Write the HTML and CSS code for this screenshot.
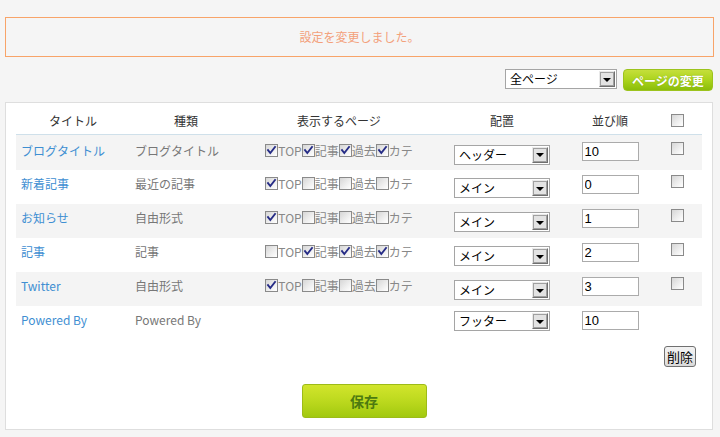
FILE: index.html
```html
<!DOCTYPE html>
<html lang="ja">
<head>
<meta charset="utf-8">
<title>ウィジェット設定</title>
<link rel="stylesheet" href="styles.css">
</head>
<body>
<div class="msg">設定を変更しました。</div>

<div class="toolbar">
  <div class="select select-wide"><span class="select-text">全ページ</span><span class="arrow"><i></i></span></div>
  <button class="btn-green">ページの変更</button>
</div>

<div class="panel">
  <table class="widgets">
    <colgroup>
      <col class="c1"><col class="c2"><col class="c3"><col class="c4"><col class="c5"><col class="c6">
    </colgroup>
    <thead>
      <tr>
        <th>タイトル</th>
        <th>種類</th>
        <th>表示するページ</th>
        <th>配置</th>
        <th>並び順</th>
        <th><span class="cb"></span></th>
      </tr>
    </thead>
    <tbody>
      <tr class="gray first">
        <td class="name"><a>ブログタイトル</a></td>
        <td class="kind">ブログタイトル</td>
        <td class="pages"><span class="cb on"><svg viewBox="0 0 11 11"><path d="M2 5.2 L4.3 8 L9 2"/></svg></span>TOP<span class="cb on"><svg viewBox="0 0 11 11"><path d="M2 5.2 L4.3 8 L9 2"/></svg></span>記事<span class="cb on"><svg viewBox="0 0 11 11"><path d="M2 5.2 L4.3 8 L9 2"/></svg></span>過去<span class="cb on"><svg viewBox="0 0 11 11"><path d="M2 5.2 L4.3 8 L9 2"/></svg></span>カテ</td>
        <td class="place"><div class="select"><span class="select-text">ヘッダー</span><span class="arrow"><i></i></span></div></td>
        <td class="order"><input class="num" type="text" value="10"></td>
        <td class="chk"><span class="cb"></span></td>
      </tr>
      <tr>
        <td class="name"><a>新着記事</a></td>
        <td class="kind">最近の記事</td>
        <td class="pages"><span class="cb on"><svg viewBox="0 0 11 11"><path d="M2 5.2 L4.3 8 L9 2"/></svg></span>TOP<span class="cb"></span>記事<span class="cb"></span>過去<span class="cb"></span>カテ</td>
        <td class="place"><div class="select"><span class="select-text">メイン</span><span class="arrow"><i></i></span></div></td>
        <td class="order"><input class="num" type="text" value="0"></td>
        <td class="chk"><span class="cb"></span></td>
      </tr>
      <tr class="gray">
        <td class="name"><a>お知らせ</a></td>
        <td class="kind">自由形式</td>
        <td class="pages"><span class="cb on"><svg viewBox="0 0 11 11"><path d="M2 5.2 L4.3 8 L9 2"/></svg></span>TOP<span class="cb"></span>記事<span class="cb"></span>過去<span class="cb"></span>カテ</td>
        <td class="place"><div class="select"><span class="select-text">メイン</span><span class="arrow"><i></i></span></div></td>
        <td class="order"><input class="num" type="text" value="1"></td>
        <td class="chk"><span class="cb"></span></td>
      </tr>
      <tr>
        <td class="name"><a>記事</a></td>
        <td class="kind">記事</td>
        <td class="pages"><span class="cb"></span>TOP<span class="cb on"><svg viewBox="0 0 11 11"><path d="M2 5.2 L4.3 8 L9 2"/></svg></span>記事<span class="cb on"><svg viewBox="0 0 11 11"><path d="M2 5.2 L4.3 8 L9 2"/></svg></span>過去<span class="cb on"><svg viewBox="0 0 11 11"><path d="M2 5.2 L4.3 8 L9 2"/></svg></span>カテ</td>
        <td class="place"><div class="select"><span class="select-text">メイン</span><span class="arrow"><i></i></span></div></td>
        <td class="order"><input class="num" type="text" value="2"></td>
        <td class="chk"><span class="cb"></span></td>
      </tr>
      <tr class="gray">
        <td class="name"><a>Twitter</a></td>
        <td class="kind">自由形式</td>
        <td class="pages"><span class="cb on"><svg viewBox="0 0 11 11"><path d="M2 5.2 L4.3 8 L9 2"/></svg></span>TOP<span class="cb"></span>記事<span class="cb"></span>過去<span class="cb"></span>カテ</td>
        <td class="place"><div class="select"><span class="select-text">メイン</span><span class="arrow"><i></i></span></div></td>
        <td class="order"><input class="num" type="text" value="3"></td>
        <td class="chk"><span class="cb"></span></td>
      </tr>
      <tr class="last">
        <td class="name"><a>Powered By</a></td>
        <td class="kind">Powered By</td>
        <td class="pages"></td>
        <td class="place"><div class="select"><span class="select-text">フッター</span><span class="arrow"><i></i></span></div></td>
        <td class="order"><input class="num" type="text" value="10"></td>
        <td class="chk"></td>
      </tr>
    </tbody>
  </table>

  <div class="del-row"><button class="btn-del">削除</button></div>
  <div class="save-row"><button class="btn-save">保存</button></div>
</div>
</body>
</html>
```

FILE: styles.css
```css
* { box-sizing: border-box; }

html, body {
  margin: 0;
  padding: 0;
  background: #f5f5f5;
}

body {
  font-family: "Noto Sans CJK JP", "Noto Sans", sans-serif;
  font-size: 12px;
  color: #333;
  height: 437px;
  overflow: hidden;
}

.msg {
  margin: 17px 0 0 5px;
  width: 709px;
  height: 40px;
  border: 1px solid #f8a469;
  color: #f3a07b;
  display: flex;
  align-items: center;
  justify-content: center;
  padding-bottom: 1px;
}

.toolbar {
  width: 713px;
  margin-top: 12px;
  display: flex;
  justify-content: flex-end;
  align-items: flex-start;
  gap: 6px;
  height: 22px;
}

/* fake select */
.select {
  display: inline-flex;
  align-items: center;
  width: 96px;
  height: 20px;
  border: 1px solid #a5a5a5;
  background: #fff;
  color: #000;
  text-align: left;
  vertical-align: top;
}
.select-wide { width: 112px; height: 20px; }
.select-text {
  flex: 1;
  padding-left: 4px;
  line-height: 18px;
  font-size: 12px;
  white-space: nowrap;
}
.arrow {
  width: 16px;
  height: 16px;
  margin-right: 1px;
  border: 1px solid;
  border-color: #e9e9e9 #6f6f6f #6f6f6f #e9e9e9;
  outline: 1px solid #a0a0a0;
  outline-offset: -2px;
  background: #e3e3e3;
  display: flex;
  align-items: center;
  justify-content: center;
}
.arrow i {
  display: block;
  width: 0;
  height: 0;
  border-left: 4px solid transparent;
  border-right: 4px solid transparent;
  border-top: 4px solid #000;
  margin-top: 1px;
}

.btn-green {
  width: 90px;
  height: 22px;
  border: 1px solid #9cc31d;
  border-radius: 4px;
  background: linear-gradient(#c5df3b, #a8d21a 55%, #8bbd0a);
  color: #fff;
  font-family: inherit;
  font-size: 12px;
  font-weight: bold;
  padding: 0;
  text-shadow: 0 0 1px rgba(80, 110, 0, 0.5);
}

.panel {
  margin: 11px 0 0 5px;
  width: 708px;
  background: #fff;
  border: 1px solid #dedede;
  padding: 8px 9px 11px 10px;
}

.widgets {
  width: 686px;
  table-layout: fixed;
  border-collapse: collapse;
}
.c1 { width: 114px; }
.c2 { width: 112px; }
.c3 { width: 194px; }
.c4 { width: 132px; }
.c5 { width: 84px; }
.c6 { width: 50px; }

.widgets th {
  height: 23px;
  font-weight: normal;
  color: #333;
  text-align: center;
  vertical-align: middle;
  padding: 0 0 3px;
  border-bottom: 1px solid #cfe0ea;
  line-height: 17px;
}
.widgets th .cb { vertical-align: top; margin-top: 2px; }

.widgets td {
  height: 34px;
  padding: 5px 0 0 5px;
  vertical-align: top;
  line-height: 17px;
  white-space: nowrap;
}
.widgets tr.first td { height: 36px; padding-top: 7px; }
.widgets tr.gray td { background: #f4f4f4; }

.name a { color: #3f8fd2; text-decoration: none; }
.kind { color: #777; }

.widgets td.pages {
  padding-left: 0;
  text-align: center;
  color: #888;
  letter-spacing: 0;
}
.pages .cb { vertical-align: top; margin-top: 2px; }

.widgets td.place { padding-left: 0; text-align: center; }
.place .select { margin-top: 3px; }
.widgets tr.last td.place .select { margin-top: 0; }

.widgets td.order { padding-left: 0; text-align: center; }
.num {
  width: 57px;
  height: 19px;
  border: 1px solid #ababab;
  padding: 0 0 0 2px;
  margin: 0;
  font-family: "Liberation Sans", Arial, sans-serif;
  font-size: 13px;
  color: #000;
  background: #fff;
  vertical-align: top;
}

.widgets td.chk { padding-left: 0; text-align: center; }

/* checkbox */
.cb {
  display: inline-block;
  width: 13px;
  height: 13px;
  border: 1px solid #8a8a8a;
  background: linear-gradient(135deg, #d6d6d6, #f4f4f4 70%, #fff);
  position: relative;
  vertical-align: top;
}
.cb svg {
  display: block;
  width: 11px;
  height: 11px;
}
.cb svg path {
  fill: none;
  stroke: #262c86;
  stroke-width: 1.9;
  stroke-linecap: square;
}

.del-row {
  display: flex;
  justify-content: flex-end;
  padding-right: 7px;
  margin-top: 6px;
}
.btn-del {
  width: 32px;
  height: 21px;
  border: 1px solid #707070;
  border-radius: 3px;
  background: linear-gradient(#f2f2f2, #ebebeb 50%, #d9d9d9);
  font-family: inherit;
  font-size: 13px;
  color: #000;
  padding: 0;
  line-height: 17px;
}

.save-row {
  display: flex;
  justify-content: center;
  padding-left: 9px;
  margin-top: 17px;
}
.btn-save {
  width: 125px;
  height: 34px;
  border: 1px solid #9dbb18;
  border-radius: 3px;
  background: linear-gradient(#d2e52c, #bcd91e 50%, #a2c90f);
  color: #4c7a10;
  font-family: inherit;
  font-size: 14px;
  font-weight: bold;
  padding: 0;
}
```
